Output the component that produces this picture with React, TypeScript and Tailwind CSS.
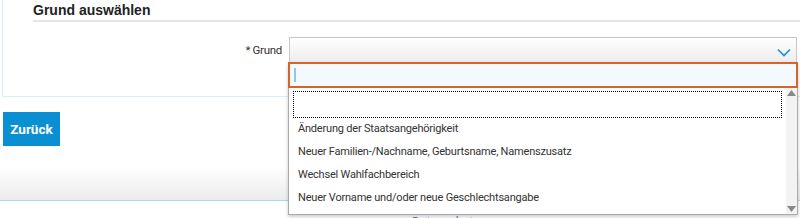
import React from "react";

const items = [
  "Änderung der Staatsangehörigkeit",
  "Neuer Familien-/Nachname, Geburtsname, Namenszusatz",
  "Wechsel Wahlfachbereich",
  "Neuer Vorname und/oder neue Geschlechtsangabe",
];

export default function App() {
  return (
    <div className="relative w-[800px] h-[218px] overflow-hidden bg-white text-[#333] font-['Roboto',Arial,sans-serif]">
      {/* form panel */}
      <div className="ml-[2px] h-[97px] border-l border-b border-[#d9edf7]">
        <div className="ml-[30px] border-b-2 border-[#e6e6e6] pt-[2px] pb-[2px]">
          <h2 className="text-[14px] font-bold leading-[16px] text-[#222] font-['Liberation_Sans',Arial,sans-serif]">Grund auswählen</h2>
        </div>
        <div className="mt-[15px] flex items-center">
          <label className="w-[280px] text-right text-[11.5px] text-[#333] pr-[1px] tracking-[-0.3px]">* Grund</label>
          <div className="ml-[6px] flex h-[27px] w-[508px] items-center justify-end border border-[#c8c8c8] bg-gradient-to-b from-white to-[#ececec] pr-[5px]">
            <svg width="14" height="9" viewBox="0 0 14 9" className="mt-[3px]">
              <path d="M1 1.5 L7 7.5 L13 1.5" fill="none" stroke="#1a8fd0" strokeWidth="1.6" />
            </svg>
          </div>
        </div>
      </div>

      {/* back button */}
      <button className="ml-[3px] mt-[15px] h-[34px] w-[57px] bg-[#0b8fd3] text-[13.5px] font-bold text-white">
        Zurück
      </button>

      {/* bottom shadow and rule */}
      <div className="mt-[21px] h-[34px] w-full bg-gradient-to-b from-white to-[#ececec] border-b border-[#a9d7ea]" />
      <div className="pl-[412px] pt-[14px] text-[12px] leading-[14px] text-[#2a8cc4]">Datenschutz</div>

      {/* dropdown */}
      <div className="absolute left-[288px] top-[62px] w-[510px] h-[153px] border border-[#aaa] bg-white shadow-[0_2px_4px_rgba(0,0,0,0.2)] flex flex-col">
        <div className="mx-[-1px] mt-[-1px] h-[26px] border-2 border-[#d2642c] bg-[#f4f9fd] flex items-center px-[4px]">
          <span className="block h-[14px] w-[2px] bg-[#8ec8e6]" />
        </div>
        <div className="flex flex-1">
          <ul className="flex-1 pt-[3px] pl-[4px]">
            <li className="h-[27px] border border-dotted border-black" />
            {items.map((t) => (
              <li key={t} className="h-[23px] flex items-center pl-[5px] text-[11px] text-[#333] tracking-[-0.2px]">
                {t}
              </li>
            ))}
          </ul>
          <div className="w-[11px] ml-[4px] bg-[#f3f3f3] flex flex-col justify-between items-center py-[2px]">
            <svg width="9" height="6" viewBox="0 0 9 6"><path d="M4.5 0 L9 6 L0 6 Z" fill="#888" /></svg>
            <svg width="9" height="6" viewBox="0 0 9 6"><path d="M0 0 L9 0 L4.5 6 Z" fill="#888" /></svg>
          </div>
        </div>
      </div>
    </div>
  );
}
